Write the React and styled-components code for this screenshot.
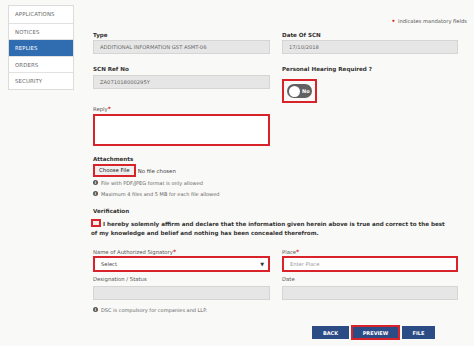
import React from "react";
import styled, { createGlobalStyle } from "styled-components";

const GlobalStyle = createGlobalStyle`
  html, body {
    margin: 0;
    padding: 0;
    background: #f9f9f7;
  }
  body {
    font-family: "DejaVu Sans", Verdana, sans-serif;
    color: #333;
  }
  * { box-sizing: border-box; }
`;

const Page = styled.div`
  display: flex;
  width: 474px;
  height: 346px;
  overflow: hidden;
  padding: 5px 0 0 8px;
`;

const Sidebar = styled.ul`
  list-style: none;
  margin: 0;
  padding: 0;
  width: 66px;
  align-self: flex-start;
  border: 1px solid #dcdcdc;
  background: #fff;
`;

const NavItem = styled.li`
  height: 16.6px;
  line-height: 16px;
  padding-left: 6px;
  font-size: 5.4px;
  letter-spacing: 0.1px;
  color: ${(p) => (p.active ? "#fff" : "#6a6a6a")};
  background: ${(p) => (p.active ? "#2f6cb0" : "transparent")};
  border-top: ${(p) => (p.first ? "none" : "1px solid #e2e2e2")};
`;

const Main = styled.div`
  width: 365px;
  margin-left: 19px;
  display: flex;
  flex-direction: column;
`;

const Mandatory = styled.div`
  align-self: flex-end;
  margin: 12px -9px 0 0;
  height: 9px;
  font-size: 5.2px;
  color: #555;
`;

const Star = styled.span`
  color: #d8232a;
  font-weight: bold;
  font-size: ${(p) => p.size || "7px"};
  margin-right: 1px;
`;

const Row = styled.div`
  display: grid;
  grid-template-columns: 177px 176px;
  column-gap: 12px;
  margin-top: ${(p) => p.top || 0}px;
`;

const Field = styled.div`
  display: flex;
  flex-direction: column;
  align-items: flex-start;
  margin-top: ${(p) => p.top || 0}px;
`;

const Label = styled.div`
  height: 9px;
  line-height: 9px;
  font-size: ${(p) => (p.light ? "5.3px" : "5.6px")};
  font-weight: ${(p) => (p.light ? "normal" : "bold")};
  color: ${(p) => (p.light ? "#555" : "#333")};
  margin-bottom: ${(p) => p.gap || 0}px;
`;

const ReadOnly = styled.div`
  width: 100%;
  height: 14px;
  line-height: 12px;
  padding-left: 6px;
  background: #e6e6e6;
  border: 1px solid #d5d5d5;
  font-size: 5.2px;
  color: #666;
  text-transform: uppercase;
`;

const Highlight = styled.div`
  border: 2px solid #d8232a;
  padding: ${(p) => p.pad || "0"};
  margin-top: ${(p) => p.top || 0}px;
`;

const Toggle = styled.div`
  width: 25px;
  height: 14px;
  border-radius: 7px;
  background: #616161;
  display: flex;
  align-items: center;
  padding: 0 2px;
  gap: 2px;
`;

const Knob = styled.div`
  width: 11px;
  height: 11px;
  border-radius: 50%;
  background: #fff;
`;

const ToggleText = styled.span`
  font-size: 5px;
  font-weight: bold;
  color: #fff;
`;

const TextArea = styled.div`
  width: 177px;
  height: 32px;
  background: #fff;
  border: 2px solid #d8232a;
`;

const FileRow = styled.div`
  display: flex;
  align-items: center;
  height: 13px;
  font-size: 5.4px;
  color: #444;
`;

const FileButton = styled.div`
  height: 13px;
  padding: 0 4px;
  border: 2px solid #d8232a;
  background: #efefef;
  font-size: 5.4px;
  line-height: 9px;
  color: #222;
  margin-right: 2px;
`;

const Info = styled.div`
  display: flex;
  align-items: center;
  height: 11px;
  font-size: 5px;
  color: #666;
  gap: 3px;
  margin-top: ${(p) => p.top || 0}px;
`;

const InfoDot = styled.span`
  width: 5px;
  height: 5px;
  border-radius: 50%;
  background: #555;
  color: #fff;
  font-size: 4px;
  line-height: 5px;
  text-align: center;
  font-weight: bold;
`;

const Declaration = styled.div`
  width: 356px;
  margin-left: -2px;
  font-size: 5.6px;
  font-weight: bold;
  line-height: 9px;
  color: #333;
`;

const Check = styled.span`
  display: inline-block;
  vertical-align: -1px;
  width: 10px;
  height: 8px;
  border: 2px solid #d8232a;
  background: #eee;
  margin-right: 2px;
`;

const InputBox = styled.div`
  width: 100%;
  height: 16px;
  line-height: 12px;
  padding: 0 4px 0 6px;
  background: #fff;
  border: 2px solid #d8232a;
  font-size: 5.2px;
  color: ${(p) => (p.placeholder ? "#999" : "#444")};
  display: flex;
  align-items: center;
  justify-content: space-between;
`;

const Caret = styled.span`
  font-size: 5px;
  color: #333;
`;

const Actions = styled.div`
  display: flex;
  justify-content: flex-end;
  align-items: center;
  gap: 2px;
  margin: 10px 23px 0 0;
`;

const Button = styled.div`
  height: ${(p) => (p.marked ? "15px" : "13px")};
  width: ${(p) => p.w}px;
  background: #2c4c85;
  border: ${(p) => (p.marked ? "2px solid #d8232a" : "none")};
  color: #fff;
  font-size: 5px;
  font-weight: bold;
  display: flex;
  align-items: center;
  justify-content: center;
  text-transform: uppercase;
`;

const navItems = ["Applications", "Notices", "Replies", "Orders", "Security"];

export default function App() {
  return (
    <>
      <GlobalStyle />
      <Page>
        <Sidebar>
          {navItems.map((item, i) => (
            <NavItem key={item} first={i === 0} active={item === "Replies"}>
              {item.toUpperCase()}
            </NavItem>
          ))}
        </Sidebar>
        <Main>
          <Mandatory>
            <Star size="6px">•</Star> indicates mandatory fields
          </Mandatory>

          <Row top={5}>
            <Field>
              <Label>Type</Label>
              <ReadOnly>Additional Information GST ASMT-06</ReadOnly>
            </Field>
            <Field>
              <Label>Date Of SCN</Label>
              <ReadOnly>17/10/2018</ReadOnly>
            </Field>
          </Row>

          <Row top={11}>
            <Field>
              <Label gap={1}>SCN Ref No</Label>
              <ReadOnly>ZA071018000295Y</ReadOnly>
            </Field>
            <Field>
              <Label>Personal Hearing Required ?</Label>
              <Highlight pad="3px 3px" top={5}>
                <Toggle>
                  <Knob />
                  <ToggleText>No</ToggleText>
                </Toggle>
              </Highlight>
            </Field>
          </Row>

          <Field top={1}>
            <Label light gap={1}>
              Reply<Star size="6px">*</Star>
            </Label>
            <TextArea />
          </Field>

          <Field top={9}>
            <Label>Attachments</Label>
            <FileRow>
              <FileButton>Choose File</FileButton>No file chosen
            </FileRow>
            <Info>
              <InfoDot>i</InfoDot>File with PDF/JPEG format is only allowed
            </Info>
            <Info>
              <InfoDot>i</InfoDot>Maximum 4 files and 5 MB for each file allowed
            </Info>
          </Field>

          <Field top={8}>
            <Label gap={3}>Verification</Label>
            <Declaration>
              <Check />I hereby solemnly affirm and declare that the information
              given herein above is true and correct to the best of my knowledge
              and belief and nothing has been concealed therefrom.
            </Declaration>
          </Field>

          <Row top={9}>
            <Field>
              <Label light>
                Name of Authorized Signatory<Star size="6px">*</Star>
              </Label>
              <InputBox>
                Select<Caret>▼</Caret>
              </InputBox>
            </Field>
            <Field>
              <Label light>
                Place<Star size="6px">*</Star>
              </Label>
              <InputBox placeholder>Enter Place</InputBox>
            </Field>
          </Row>

          <Row top={3}>
            <Field>
              <Label light gap={2}>Designation / Status</Label>
              <ReadOnly />
              <Info top={4}>
                <InfoDot>i</InfoDot>DSC is compulsory for companies and LLP.
              </Info>
            </Field>
            <Field>
              <Label light gap={2}>Date</Label>
              <ReadOnly />
            </Field>
          </Row>

          <Actions>
            <Button w={37}>Back</Button>
            <Button w={49} marked>
              Preview
            </Button>
            <Button w={33}>File</Button>
          </Actions>
        </Main>
      </Page>
    </>
  );
}
